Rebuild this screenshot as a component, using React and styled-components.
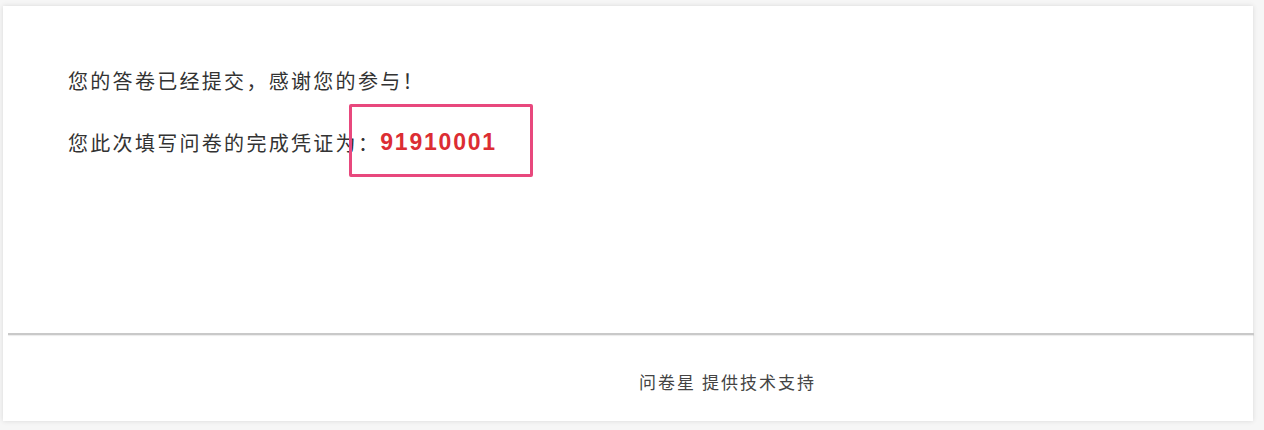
import React from 'react';
import styled, { createGlobalStyle } from 'styled-components';

const GlobalStyle = createGlobalStyle`
  html, body {
    margin: 0;
    padding: 0;
    background: #f7f7f7;
  }
  body {
    font-family: "Noto Sans CJK SC", "Noto Sans", sans-serif;
  }
`;

const App = () => {
  return (
    <Page>
      <GlobalStyle />
      <Card>
        <Content>
          <Line>您的答卷已经提交，感谢您的参与！</Line>
          <Line>
            您此次填写问卷的完成凭证为：
            <Voucher>
              <Code>91910001</Code>
              <Highlight />
            </Voucher>
          </Line>
        </Content>
        <Divider />
        <Footer>
          <FooterText>问卷星 提供技术支持</FooterText>
        </Footer>
      </Card>
    </Page>
  );
};

const Page = styled.div`
  width: 1264px;
  height: 430px;
  padding: 6px 11px 9px 3px;
  box-sizing: border-box;
  background: #f6f6f6;
`;

const Card = styled.div`
  height: 100%;
  display: flex;
  flex-direction: column;
  background: #ffffff;
  box-shadow: 0 0 5px rgba(0, 0, 0, 0.12);
`;

const Content = styled.div`
  height: 327px;
  box-sizing: border-box;
  padding: 61px 0 0 65px;
  display: flex;
  flex-direction: column;
  gap: 36px;
`;

const Line = styled.div`
  display: flex;
  align-items: center;
  height: 26px;
  font-size: 20px;
  letter-spacing: 2.3px;
  color: #333;
  white-space: nowrap;
`;

const Voucher = styled.span`
  position: relative;
  display: inline-flex;
  align-items: center;
  height: 26px;
  margin-left: 0;
`;

const Code = styled.span`
  font-family: "Liberation Sans", Arial, sans-serif;
  font-weight: bold;
  font-size: 23px;
  line-height: 26px;
  letter-spacing: 1.8px;
  color: #dc2d33;
`;

const Highlight = styled.span`
  position: absolute;
  left: -31px;
  right: -36px;
  top: -25px;
  bottom: -22px;
  border: 3px solid #e8487d;
  border-radius: 2px;
`;

const Divider = styled.div`
  height: 2px;
  margin-left: 5px;
  margin-right: -1px;
  background: #c9c9c9;
  box-shadow: 0 1px 1px rgba(0, 0, 0, 0.08);
`;

const Footer = styled.div`
  flex: 1;
  display: flex;
  justify-content: center;
  align-items: center;
  padding-left: 199px;
  padding-top: 6px;
`;

const FooterText = styled.span`
  font-size: 17px;
  letter-spacing: 2px;
  color: #444;
  white-space: pre;
`;

export default App;
